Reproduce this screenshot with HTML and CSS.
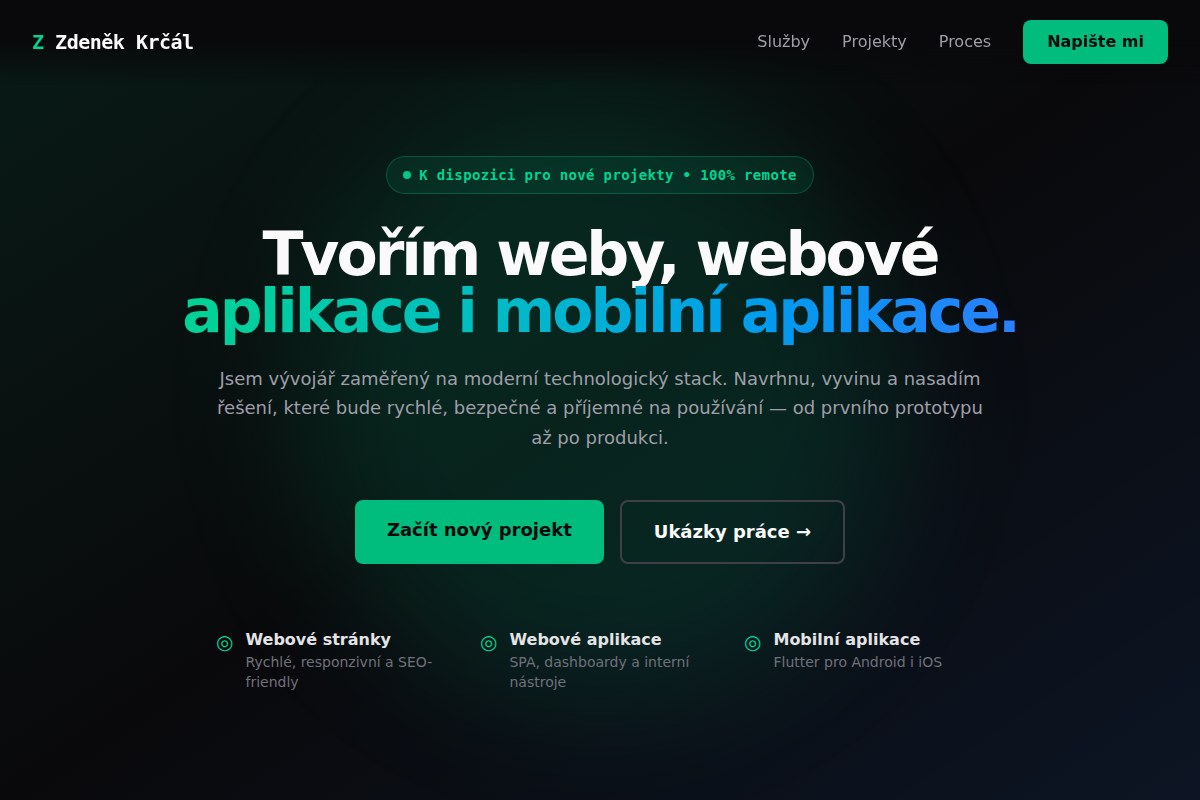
FILE: index.html
```html
<!DOCTYPE html>
<html lang="cs">
<head>
<meta charset="UTF-8">
<meta name="viewport" content="width=device-width, initial-scale=1.0">
<title>Zdeněk Krčál</title>
<link rel="stylesheet" href="styles.css">
</head>
<body>
<header class="navbar">
    <a href="#" class="logo"><span class="logo-mark">Z</span> Zdeněk Krčál</a>
    <nav class="nav-links">
        <a href="#sluzby">Služby</a>
        <a href="#projekty">Projekty</a>
        <a href="#proces">Proces</a>
        <a href="#kontakt" class="nav-cta">Napište mi</a>
    </nav>
</header>

<main class="hero">
    <div class="hero-glow"></div>
    <div class="hero-content">
        <div class="badge"><span class="badge-dot"></span>K dispozici pro nové projekty • 100% remote</div>
        <h1>Tvořím weby, webové <span class="gradient-text">aplikace i mobilní aplikace.</span></h1>
        <p class="hero-text">Jsem vývojář zaměřený na moderní technologický stack. Navrhnu, vyvinu a nasadím řešení, které bude rychlé, bezpečné a příjemné na používání — od prvního prototypu až po produkci.</p>
        <div class="hero-buttons">
            <a href="#kontakt" class="btn btn-primary">Začít nový projekt</a>
            <a href="#projekty" class="btn btn-secondary">Ukázky práce →</a>
        </div>
        <div class="features">
            <div class="feature">
                <span class="feature-icon">◎</span>
                <div>
                    <strong>Webové stránky</strong>
                    <span>Rychlé, responzivní a SEO-friendly</span>
                </div>
            </div>
            <div class="feature">
                <span class="feature-icon">◎</span>
                <div>
                    <strong>Webové aplikace</strong>
                    <span>SPA, dashboardy a interní nástroje</span>
                </div>
            </div>
            <div class="feature">
                <span class="feature-icon">◎</span>
                <div>
                    <strong>Mobilní aplikace</strong>
                    <span>Flutter pro Android i iOS</span>
                </div>
            </div>
        </div>
    </div>
</main>
</body>
</html>
```
FILE: styles.css
```css
* {
  margin: 0;
  padding: 0;
  box-sizing: border-box;
}
body {
  font-family: "DejaVu Sans", sans-serif;
  background: #09090b;
  color: #fafafa;
  line-height: 1.6;
  overflow-x: hidden;
}
a {
  color: inherit;
  text-decoration: none;
}

/* Navigation */
.navbar {
  position: fixed;
  top: 0;
  left: 0;
  right: 0;
  z-index: 10;
  display: flex;
  justify-content: space-between;
  align-items: center;
  padding: 20px 32px;
  background: linear-gradient(to bottom, #09090b 50%, transparent);
}
.logo {
  font-family: "DejaVu Sans Mono", monospace;
  font-size: 20px;
  font-weight: 700;
  letter-spacing: -0.025em;
}
.logo-mark {
  color: #00d492;
}
.nav-links {
  display: flex;
  align-items: center;
  gap: 32px;
  color: #9f9fa9;
}
.nav-cta {
  padding: 9px 24px;
  border-radius: 8px;
  background: #00bc7d;
  color: #09090b;
  font-weight: 600;
}

/* Hero */
.hero {
  position: relative;
  display: flex;
  justify-content: center;
  align-items: center;
  min-height: 100vh;
  padding: 128px 32px 80px;
  overflow: hidden;
  background: linear-gradient(to bottom right, rgba(0, 188, 125, 0.1), transparent, rgba(43, 127, 255, 0.1));
}
/* Soft green light behind the heading */
.hero-glow {
  position: absolute;
  top: 50%;
  left: 50%;
  width: 600px;
  height: 600px;
  border-radius: 50%;
  background: rgba(0, 188, 125, 0.15);
  filter: blur(64px);
  transform: translate(-50%, -50%);
}
.hero-content {
  position: relative;
  max-width: 900px;
  text-align: center;
}
.badge {
  display: inline-flex;
  align-items: center;
  gap: 8px;
  padding: 8px 16px;
  margin-bottom: 32px;
  border: 1px solid rgba(0, 188, 125, 0.3);
  border-radius: 100px;
  background: rgba(0, 188, 125, 0.1);
  color: #00d492;
  font-family: "DejaVu Sans Mono", monospace;
  font-size: 14px;
  font-weight: 600;
  line-height: 20px;
  letter-spacing: 0.025em;
}
.badge-dot {
  width: 8px;
  height: 8px;
  border-radius: 50%;
  background: #00c98b;
}
h1 {
  margin-bottom: 24px;
  font-size: 60px;
  font-weight: 700;
  line-height: 57px;
  letter-spacing: -0.05em;
}
.gradient-text {
  background: linear-gradient(100deg, #00d492, #00bfbf 34%, #00aed8 52%, #009bee 70%, #2b7fff);
  -webkit-background-clip: text;
  background-clip: text;
  color: transparent;
}
.hero-text {
  max-width: 768px;
  margin: 0 auto 48px;
  color: #9f9fa9;
  font-size: 18px;
  line-height: 1.625;
}
.hero-buttons {
  display: flex;
  justify-content: center;
  gap: 16px;
  margin-bottom: 64px;
}
.btn {
  padding: 16px 32px;
  border-radius: 8px;
  font-size: 18px;
  font-weight: 600;
  line-height: 28px;
}
.btn-primary {
  background: #00bc7d;
  color: #09090b;
}
.btn-secondary {
  border: 2px solid #3f3f46;
}

/* Features */
.features {
  display: grid;
  grid-template-columns: repeat(3, 1fr);
  gap: 24px;
  max-width: 768px;
  margin: 0 auto;
  text-align: left;
}
.feature {
  display: flex;
  gap: 12px;
}
.feature-icon {
  color: #00d492;
  font-size: 20px;
  line-height: 28px;
}
.feature strong {
  display: block;
  color: #e4e4e7;
  font-size: 16px;
  font-weight: 600;
  line-height: 24px;
}
.feature div span {
  display: block;
  color: #71717b;
  font-size: 14px;
  line-height: 20px;
}
```
